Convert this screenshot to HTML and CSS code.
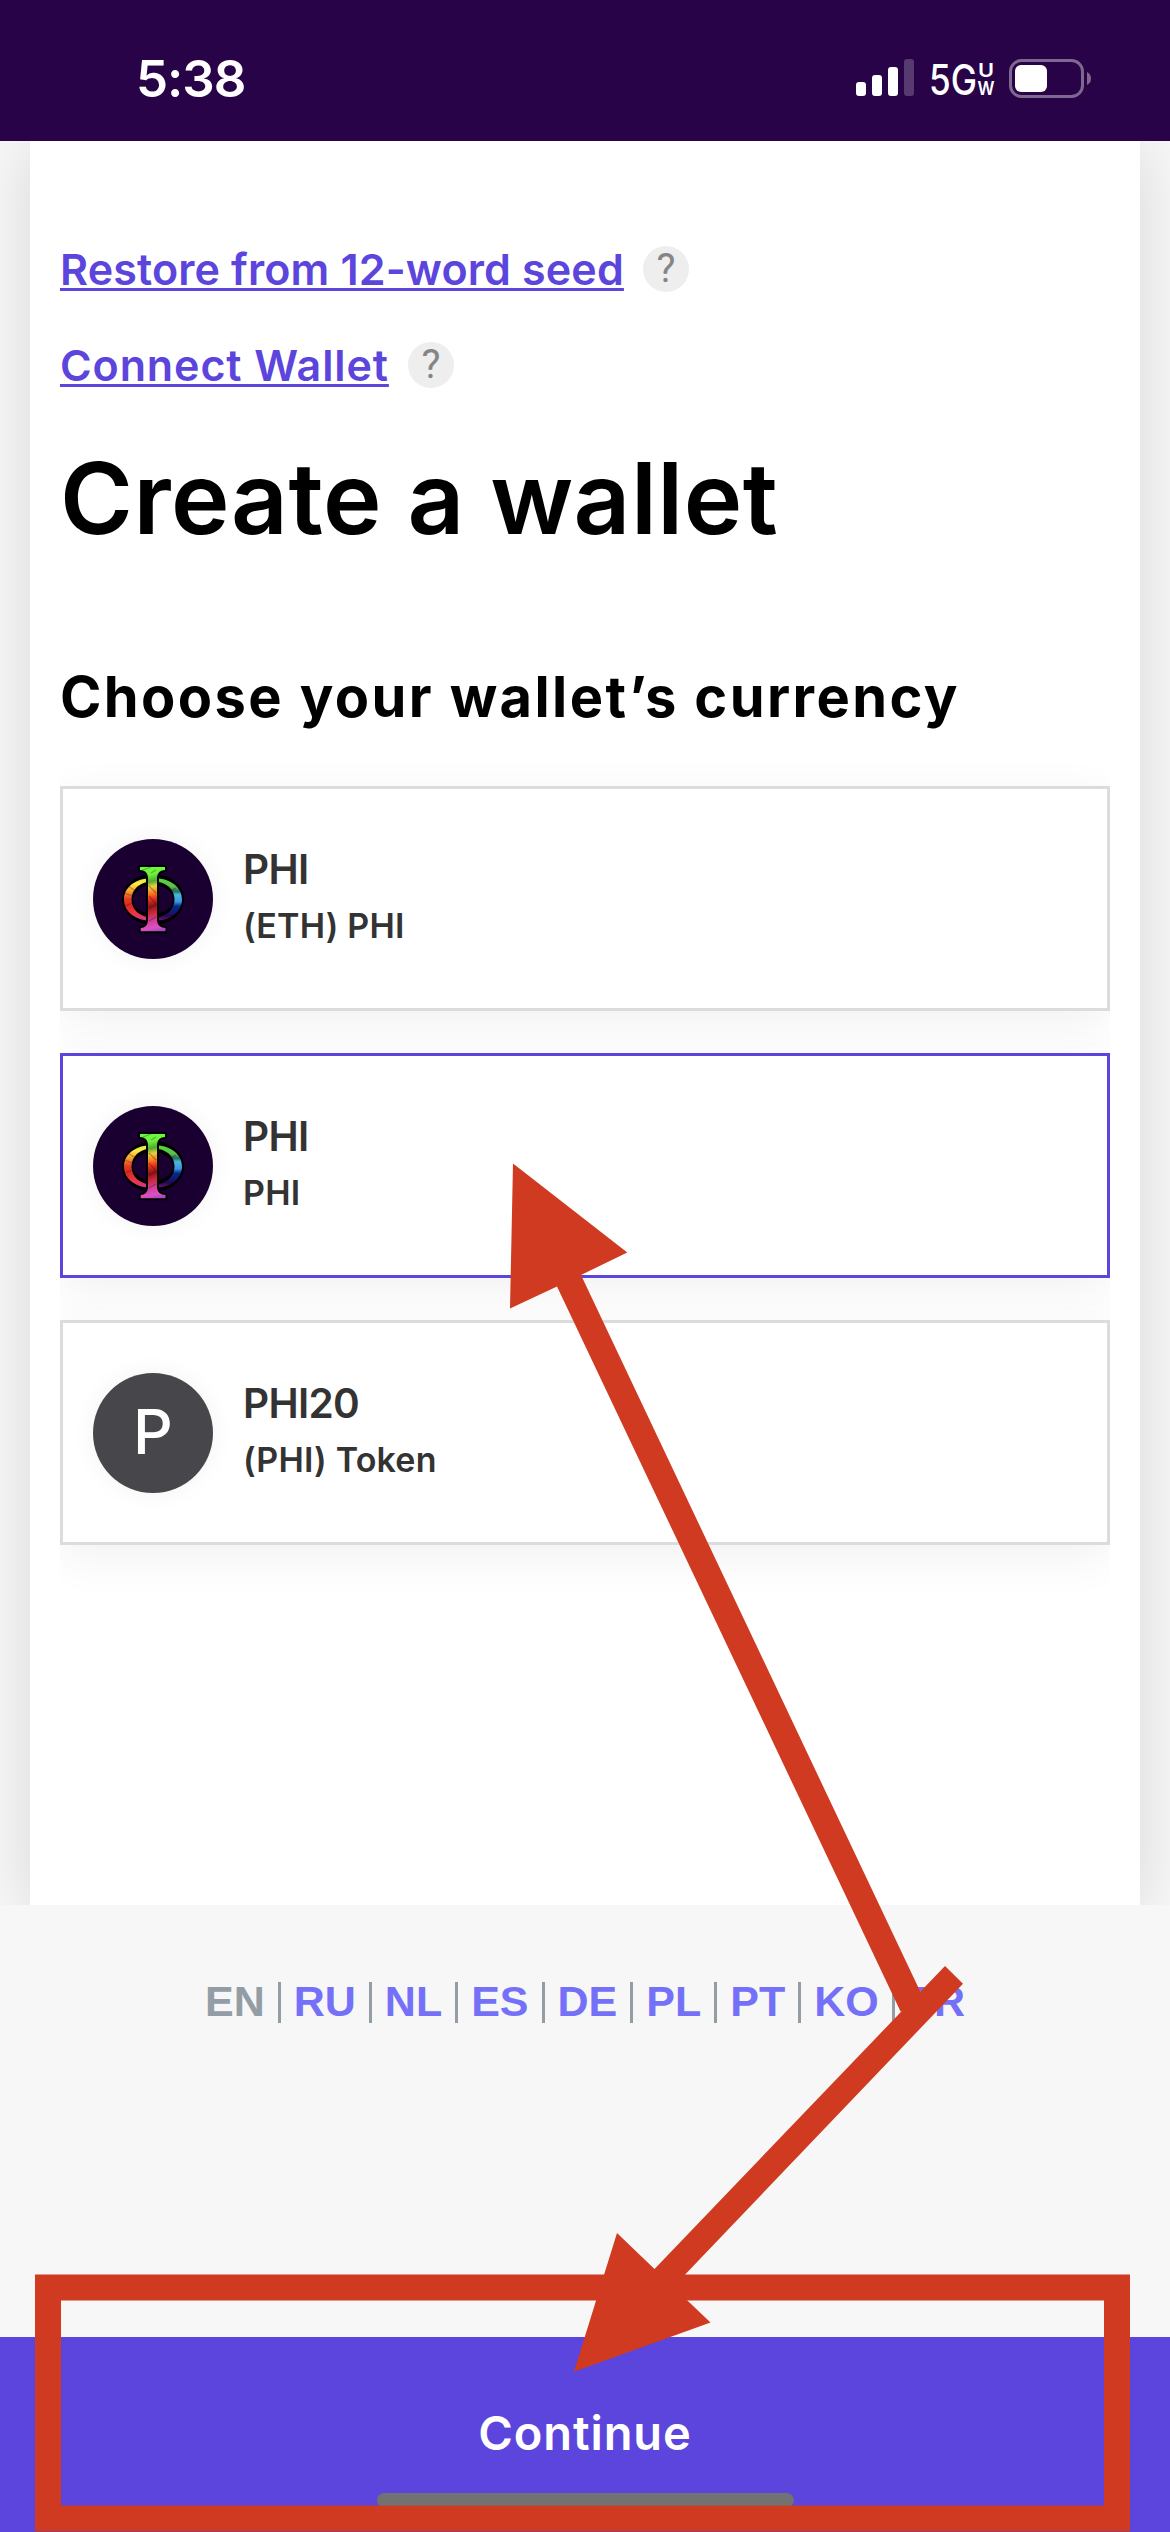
FILE: index.html
```html
<!DOCTYPE html>
<html lang="en">
<head>
<meta charset="utf-8">
<title>Create a wallet</title>
<link rel="stylesheet" href="styles.css">
</head>
<body>
<svg class="defs" width="0" height="0" aria-hidden="true">
  <defs>
    <linearGradient id="ring-left" x1="0" y1="39" x2="0" y2="83" gradientUnits="userSpaceOnUse">
      <stop offset="0" stop-color="#d8f040"/><stop offset=".14" stop-color="#ffe548"/><stop offset=".3" stop-color="#f6a02e"/><stop offset=".48" stop-color="#e23c24"/><stop offset=".62" stop-color="#d82a22"/><stop offset=".8" stop-color="#ee3440"/><stop offset="1" stop-color="#c838b8"/>
    </linearGradient>
    <linearGradient id="ring-right" x1="0" y1="39" x2="0" y2="83" gradientUnits="userSpaceOnUse">
      <stop offset="0" stop-color="#55d83a"/><stop offset=".2" stop-color="#5cc048"/><stop offset=".3" stop-color="#246b60"/><stop offset=".38" stop-color="#48b8dc"/><stop offset=".54" stop-color="#3c94e4"/><stop offset=".64" stop-color="#062a80"/><stop offset=".76" stop-color="#101880"/><stop offset=".86" stop-color="#28064c"/><stop offset="1" stop-color="#7c1c90"/>
    </linearGradient>
    <linearGradient id="stem" x1="52" y1="27" x2="66" y2="93" gradientUnits="userSpaceOnUse">
      <stop offset="0" stop-color="#62ff44"/><stop offset=".14" stop-color="#70f03c"/><stop offset=".24" stop-color="#50a830"/><stop offset=".32" stop-color="#e8d040"/><stop offset=".42" stop-color="#f87820"/><stop offset=".5" stop-color="#e43020"/><stop offset=".6" stop-color="#8c1418"/><stop offset=".7" stop-color="#c82838"/><stop offset=".82" stop-color="#d04098"/><stop offset=".92" stop-color="#dc50c4"/><stop offset="1" stop-color="#9848c0"/>
    </linearGradient>
    <symbol id="phi" viewBox="0 0 120 120">
      <circle cx="60" cy="60" r="60" fill="#1a0031"/>
      <ellipse cx="60" cy="60.500" rx="25.500" ry="20" fill="none" stroke="#000" stroke-width="11"/>
      <path d="M60 39C43 39 31 48 31 60.500S43 82 60 82V78.500C47 78.500 38.500 71 38.500 60.500S47 42.500 60 42.500Z" fill="url(#ring-left)"/>
      <path d="M60 39C77 39 89 48 89 60.500S77 82 60 82V78.500C73 78.500 81.500 71 81.500 60.500S73 42.500 60 42.500Z" fill="url(#ring-right)"/>
      <path d="M47 28H72V31Q65 31 64 38V82Q65 89 72.500 89V92.300H47.700V89Q54 89 55 82V38Q54 31 47 31Z" fill="url(#stem)" stroke="#000" stroke-width="4" stroke-linejoin="round" paint-order="stroke"/>
      <path d="M56 47l7 7M56 57l7 8-7 5M56 82l7-4M50 31l8-3M58 34l5-3M32 54l7 3M35 47l6 4M32 67l7-3M83 49l-5 3" fill="none" stroke="#400818" stroke-opacity=".3" stroke-width="1.300"/>
    </symbol>
  </defs>
</svg>

<div class="screen">
  <header class="status">
    <span class="time">5:38</span>
    <div class="status-icons">
      <svg class="signal" width="58" height="38" viewBox="0 0 58 38" fill="#fff">
        <rect x="0" y="23" width="10" height="14" rx="3"/>
        <rect x="16" y="16" width="10" height="21" rx="3"/>
        <rect x="32" y="8" width="10" height="29" rx="3"/>
        <rect x="48" y="0" width="10" height="37" rx="3" opacity=".22"/>
      </svg>
      <svg class="network" width="66" height="38" viewBox="0 0 66 38" fill="#fff">
        <text class="network-main" x="-1" y="35.500" textLength="48" lengthAdjust="spacingAndGlyphs">5G</text>
        <text class="network-tag" x="48" y="18" textLength="16" lengthAdjust="spacingAndGlyphs">U</text>
        <text class="network-tag" x="47.500" y="36" textLength="17" lengthAdjust="spacingAndGlyphs">W</text>
      </svg>
      <svg class="battery" width="83" height="39" viewBox="0 0 83 39">
        <rect x="1.500" y="1.500" width="72" height="36" rx="11" fill="none" stroke="#7e688f" stroke-width="3"/>
        <rect x="6" y="6" width="32" height="27" rx="6" fill="#fff"/>
        <path d="M78 13Q82 15 82 19.500T78 26Z" fill="#7e688f"/>
      </svg>
    </div>
  </header>

  <main class="page">
    <section class="sheet">
      <nav class="links">
        <div class="link-row"><a class="link link-restore" href="#">Restore from 12-word seed</a><span class="help">?</span></div>
        <div class="link-row"><a class="link link-connect" href="#">Connect Wallet</a><span class="help">?</span></div>
      </nav>
      <h1 class="title">Create a wallet</h1>
      <h2 class="subtitle">Choose your wallet’s currency</h2>
      <div class="options">
        <div class="option">
          <div class="avatar"><svg width="120" height="120"><use href="#phi"/></svg></div>
          <div class="names"><span class="name">PHI</span><span class="network-name">(ETH) PHI</span></div>
        </div>
        <div class="option option-selected">
          <div class="avatar"><svg width="120" height="120"><use href="#phi"/></svg></div>
          <div class="names"><span class="name">PHI</span><span class="network-name">PHI</span></div>
        </div>
        <div class="option">
          <div class="avatar avatar-letter">P</div>
          <div class="names"><span class="name">PHI20</span><span class="network-name">(PHI) Token</span></div>
        </div>
      </div>
    </section>
  </main>

  <footer class="languages">
    <span class="lang lang-current">EN</span><a class="lang">RU</a><a class="lang">NL</a><a class="lang">ES</a><a class="lang">DE</a><a class="lang">PL</a><a class="lang">PT</a><a class="lang">KO</a><a class="lang">FR</a>
  </footer>

  <div class="continue"><span class="continue-label">Continue</span><span class="home-bar"></span></div>

  <svg class="annotations" width="1170" height="2532" viewBox="0 0 1170 2532" fill="#d03a20">
    <rect x="48" y="2287.500" width="1069" height="231" fill="none" stroke="#d03a20" stroke-width="26"/>
    <path d="M513 1163.500L627.300 1252.500 581 1275 920 1991 925 2000 900.700 2011.700 557 1286.500 510 1308.500Z"/>
    <path d="M945 1966L963 1983.700 673.200 2287 710.500 2322.500 574 2371.700 617 2233 654.500 2269Z"/>
  </svg>
</div>
</body>
</html>
```

FILE: styles.css
```css
* {
  box-sizing: border-box;
}

body {
  margin: 0;
  font-family: Inter, "Noto Sans", sans-serif;
  background: #f7f7f7;
}

.defs {
  display: block;
}

.screen {
  position: relative;
  display: flex;
  flex-direction: column;
  width: 1170px;
  height: 2532px;
  overflow: hidden;
}

.status {
  display: flex;
  justify-content: space-between;
  align-items: center;
  height: 141px;
  padding: 15px 78px 0 136px;
  background: #280348;
  color: #fff;
}

.time {
  font-size: 51px;
  font-weight: 600;
  letter-spacing: -1px;
}

.status-icons {
  display: flex;
  align-items: center;
}

.network {
  margin: 0 13px 0 16px;
  overflow: visible;
}

.network-main {
  font: 500 42px Inter, sans-serif;
}

.network-tag {
  font: 600 19px Inter, sans-serif;
}

.page {
  height: 1764px;
  padding: 0 30px;
  overflow: hidden;
}

.sheet {
  height: 1764px;
  padding: 88px 30px 0;
  background: #fff;
  box-shadow: 0 6px 60px rgba(0, 0, 0, 0.13);
}

.links {
  display: flex;
  flex-direction: column;
  gap: 16px;
}

.link-row {
  display: flex;
  align-items: center;
  gap: 19px;
  height: 80px;
}

.link {
  color: #5c45dc;
  font-size: 43px;
  font-weight: 600;
  line-height: 80px;
  text-decoration: underline;
  text-decoration-thickness: 3px;
  text-underline-offset: 3px;
  text-decoration-skip-ink: none;
}

.link-restore {
  letter-spacing: 0.15px;
}

.link-connect {
  letter-spacing: 0.9px;
}

.help {
  width: 46px;
  height: 46px;
  border-radius: 50%;
  background: #eee;
  color: #858585;
  font: 400 40px/46px Roboto, sans-serif;
  text-align: center;
}

.title {
  margin: 33px 0 0;
  font-size: 99px;
  font-weight: 600;
  line-height: 120px;
  letter-spacing: 0.5px;
  white-space: nowrap;
}

.subtitle {
  margin: 99px 0 0;
  font-size: 56px;
  font-weight: 700;
  line-height: 80px;
  letter-spacing: 2.4px;
  white-space: nowrap;
}

.options {
  display: flex;
  flex-direction: column;
  gap: 42px;
  padding: 49px 0 70px;
  overflow: hidden;
}

.option {
  display: flex;
  align-items: center;
  gap: 30px;
  height: 225px;
  padding: 0 30px;
  border: 3px solid #dcdcdc;
  background: #fff;
  box-shadow: 0 12px 45px rgba(0, 0, 0, 0.06);
}

.option-selected {
  border-color: #5c45dc;
}

.avatar {
  width: 120px;
  height: 120px;
  border-radius: 50%;
  box-shadow: 0 0 24px rgba(0, 0, 0, 0.05);
}

.avatar svg {
  display: block;
}

.avatar-letter {
  background: #47464b;
  color: #fff;
  font-size: 62px;
  font-weight: 500;
  line-height: 118px;
  text-align: center;
}

.names {
  display: flex;
  flex-direction: column;
  padding-bottom: 2px;
  color: #333;
  font-weight: 600;
  white-space: nowrap;
}

.name {
  font-size: 40.5px;
  line-height: 56px;
  letter-spacing: -0.7px;
}

.network-name {
  font-size: 34px;
  line-height: 56px;
  letter-spacing: 0.2px;
}

.languages {
  display: flex;
  justify-content: center;
  height: 432px;
  padding-top: 77px;
  background: #f7f7f7;
  font: 700 43px/38px "Liberation Sans", sans-serif;
}

.lang {
  height: 41px;
  padding: 0 13px;
  border-left: 3px solid #929da5;
  color: #7471f8;
}

.lang-current {
  border-left: 0;
  color: #929da5;
}

.continue {
  display: flex;
  flex-direction: column;
  align-items: center;
  height: 195px;
  padding-top: 66px;
  background: #5c45dc;
}

.continue-label {
  color: #fff;
  font-size: 47px;
  font-weight: 600;
  line-height: 60px;
  letter-spacing: 0.9px;
}

.home-bar {
  width: 417px;
  height: 15px;
  margin-top: 30px;
  border-radius: 8px;
  background: #727272;
}

.annotations {
  position: absolute;
  left: 0;
  top: 0;
}
```
